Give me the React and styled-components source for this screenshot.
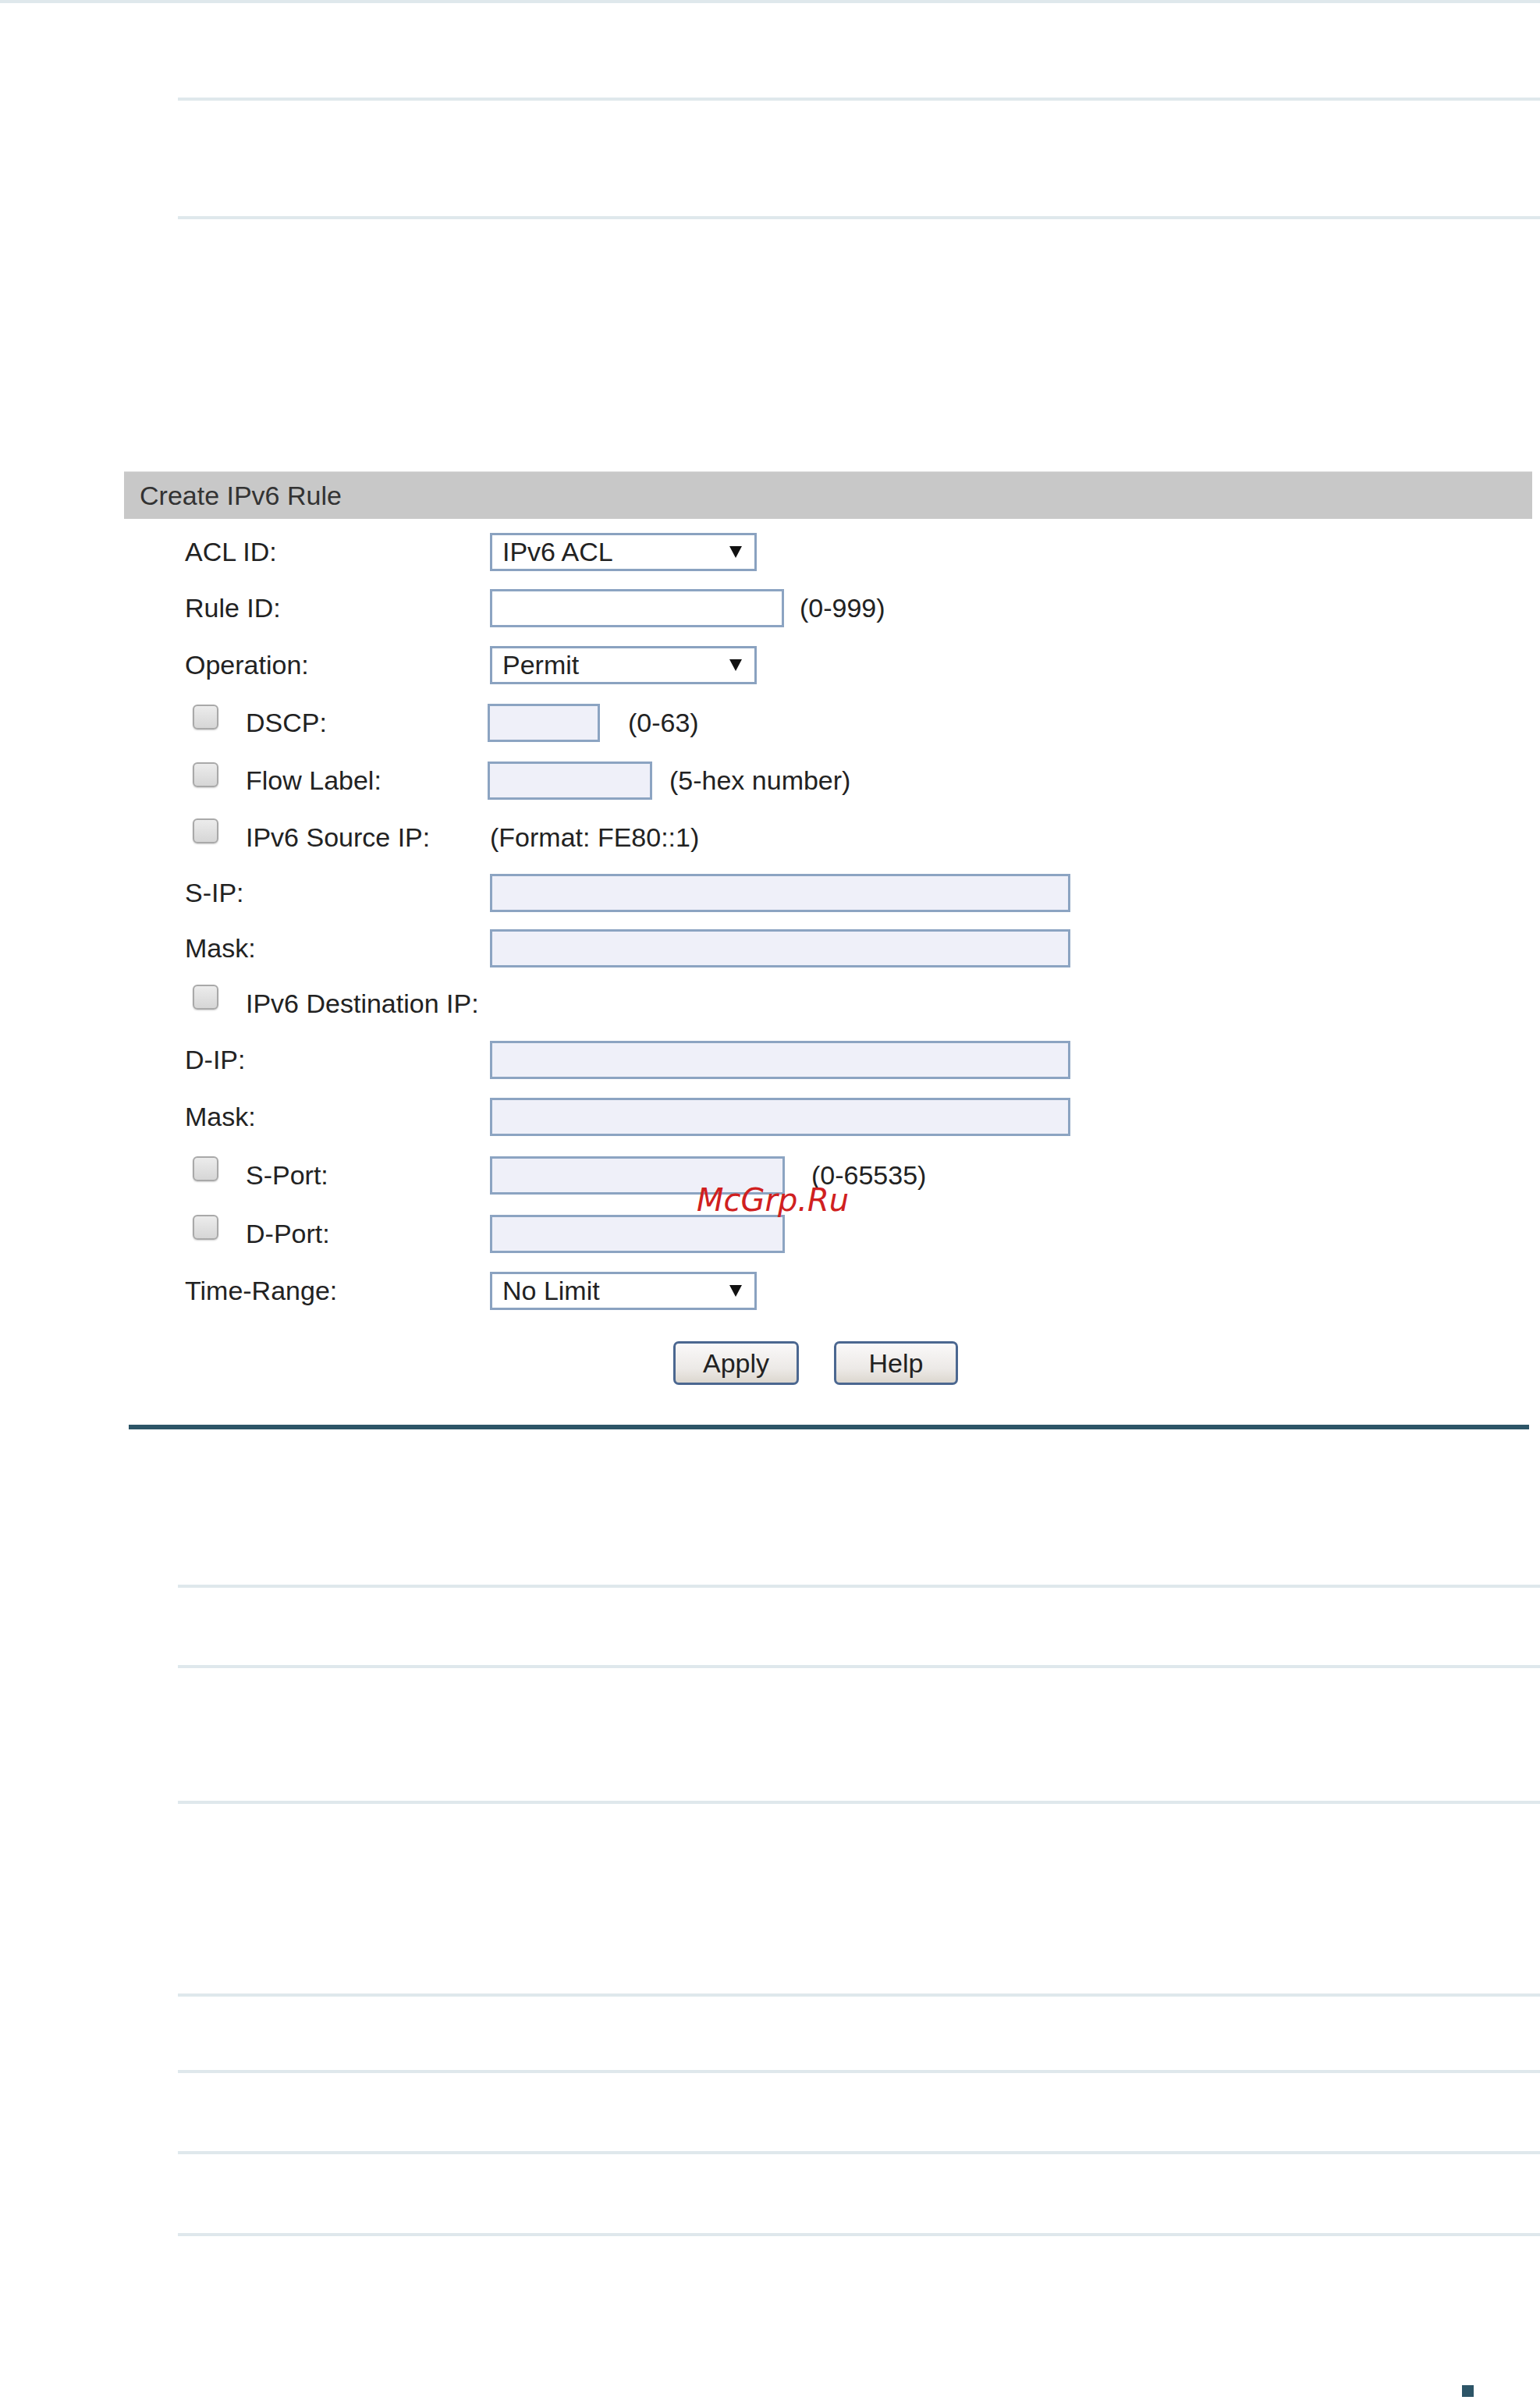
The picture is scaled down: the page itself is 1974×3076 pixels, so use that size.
import React from "react";
import styled, { createGlobalStyle } from "styled-components";

const Global = createGlobalStyle`
  html, body { margin: 0; padding: 0; background: #ffffff; }
  body { font-family: "Liberation Sans", Arial, sans-serif; }
`;

const Page = styled.div`
  position: relative;
  width: 1974px;
  height: 3076px;
  overflow: hidden;
  display: flex;
  flex-direction: column;
  background: #ffffff;
`;

const Rule = styled.div`
  flex: none;
  height: ${(p) => p.$h || 4}px;
  margin-top: ${(p) => p.$top || 0}px;
  margin-left: ${(p) => p.$left || 0}px;
  width: ${(p) => p.$w}px;
  background: ${(p) => (p.$dark ? "#2d5567" : "#dfe8ec")};
`;

const PanelHead = styled.div`
  flex: none;
  margin-top: 323px;
  margin-left: 159px;
  width: 1805px;
  height: 61px;
  box-sizing: border-box;
  background: #c8c8c8;
  border-top: 1px solid #dedede;
  display: flex;
  align-items: center;
  padding-left: 20px;
  font-size: 34px;
  color: #333333;
`;

const Form = styled.div`
  flex: none;
  margin-left: 237px;
  padding-top: 7px;
  display: flex;
  flex-direction: column;
`;

const Row = styled.div`
  display: flex;
  align-items: center;
  height: ${(p) => p.$h}px;
`;

const LabelCell = styled.div`
  flex: none;
  width: 391px;
  display: flex;
  align-items: center;
  font-size: 34px;
  color: #222222;
  white-space: nowrap;
`;

const Check = styled.span`
  flex: none;
  width: 33px;
  height: 32px;
  box-sizing: border-box;
  margin-left: 10px;
  margin-right: 35px;
  margin-bottom: 16px;
  border: 2px solid #a9a9a9;
  border-radius: 6px;
  background: linear-gradient(#ececec, #d6d6d6);
  box-shadow: 0 1px 2px rgba(0, 0, 0, 0.18);
`;

const Field = styled.div`
  flex: none;
  width: ${(p) => p.$w}px;
  height: 49px;
  box-sizing: border-box;
  margin-left: ${(p) => p.$shift || 0}px;
  border: 3px solid #8ca4c2;
  background: ${(p) => (p.$white ? "#ffffff" : "#eff0f9")};
`;

const Select = styled.div`
  flex: none;
  width: 342px;
  height: 49px;
  box-sizing: border-box;
  border: 3px solid #8aa2c0;
  background: #ffffff;
  display: flex;
  align-items: center;
  justify-content: space-between;
  padding: 0 16px 0 13px;
  font-size: 34px;
  color: #222222;
`;

const Hint = styled.span`
  margin-left: ${(p) => p.$gap || 0}px;
  font-size: 34px;
  color: #222222;
  white-space: nowrap;
`;

const ButtonRow = styled.div`
  display: flex;
  gap: 45px;
  margin-top: 29px;
  margin-left: 626px;
`;

const Button = styled.button`
  width: ${(p) => p.$w}px;
  height: 56px;
  box-sizing: border-box;
  border: 3px solid #4b6790;
  border-radius: 7px;
  background: linear-gradient(#faf9f9, #ece9e6 65%, #dcd7cf);
  font-family: "Liberation Sans", Arial, sans-serif;
  font-size: 34px;
  color: #222222;
  padding: 0;
`;

const Square = styled.div`
  flex: none;
  width: 15px;
  height: 15px;
  margin-top: 191px;
  margin-left: 1874px;
  background: #2d5567;
`;

const Watermark = styled.div`
  position: absolute;
  left: 893px;
  top: 1518px;
  font-family: "DejaVu Sans", sans-serif;
  font-style: italic;
  font-size: 40px;
  line-height: 1;
  color: #d02020;
  white-space: nowrap;
`;

const Arrow = () => (
  <svg width="16" height="15" viewBox="0 0 16 15">
    <polygon points="0,0 16,0 8,15" fill="#111111" />
  </svg>
);

const Dropdown = ({ value }) => (
  <Select>
    <span>{value}</span>
    <Arrow />
  </Select>
);

export default function App() {
  return (
    <>
      <Global />
      <Page>
        <Rule $w={1974} $h={4} />
        <Rule $top={121} $left={228} $w={1746} />
        <Rule $top={148} $left={228} $w={1746} />

        <PanelHead>Create IPv6 Rule</PanelHead>

        <Form>
          <Row $h={71}>
            <LabelCell>ACL ID:</LabelCell>
            <Dropdown value="IPv6 ACL" />
          </Row>
          <Row $h={72}>
            <LabelCell>Rule ID:</LabelCell>
            <Field $w={377} $white />
            <Hint $gap={20}>(0-999)</Hint>
          </Row>
          <Row $h={74}>
            <LabelCell>Operation:</LabelCell>
            <Dropdown value="Permit" />
          </Row>
          <Row $h={75}>
            <LabelCell>
              <Check />
              DSCP:
            </LabelCell>
            <Field $w={144} $shift={-3} />
            <Hint $gap={36}>(0-63)</Hint>
          </Row>
          <Row $h={73}>
            <LabelCell>
              <Check />
              Flow Label:
            </LabelCell>
            <Field $w={211} $shift={-3} />
            <Hint $gap={22}>(5-hex number)</Hint>
          </Row>
          <Row $h={72}>
            <LabelCell>
              <Check />
              IPv6 Source IP:
            </LabelCell>
            <Hint>(Format: FE80::1)</Hint>
          </Row>
          <Row $h={71}>
            <LabelCell>S-IP:</LabelCell>
            <Field $w={744} />
          </Row>
          <Row $h={70}>
            <LabelCell>Mask:</LabelCell>
            <Field $w={744} />
          </Row>
          <Row $h={72}>
            <LabelCell>
              <Check />
              IPv6 Destination IP:
            </LabelCell>
          </Row>
          <Row $h={72}>
            <LabelCell>D-IP:</LabelCell>
            <Field $w={744} />
          </Row>
          <Row $h={74}>
            <LabelCell>Mask:</LabelCell>
            <Field $w={744} />
          </Row>
          <Row $h={76}>
            <LabelCell>
              <Check />
              S-Port:
            </LabelCell>
            <Field $w={378} />
            <Hint $gap={34}>(0-65535)</Hint>
          </Row>
          <Row $h={74}>
            <LabelCell>
              <Check />
              D-Port:
            </LabelCell>
            <Field $w={378} />
          </Row>
          <Row $h={72}>
            <LabelCell>Time-Range:</LabelCell>
            <Dropdown value="No Limit" />
          </Row>
          <ButtonRow>
            <Button $w={161}>Apply</Button>
            <Button $w={159}>Help</Button>
          </ButtonRow>
        </Form>

        <Rule $dark $h={6} $top={51} $left={165} $w={1795} />

        <Rule $top={199} $left={228} $w={1746} />
        <Rule $top={99} $left={228} $w={1746} />
        <Rule $top={170} $left={228} $w={1746} />
        <Rule $top={243} $left={228} $w={1746} />
        <Rule $top={94} $left={228} $w={1746} />
        <Rule $top={100} $left={228} $w={1746} />
        <Rule $top={101} $left={228} $w={1746} />

        <Square />

        <Watermark>McGrp.Ru</Watermark>
      </Page>
    </>
  );
}
